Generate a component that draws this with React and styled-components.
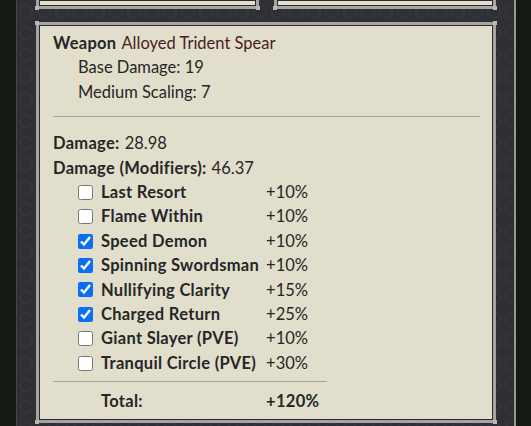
import React from 'react'
import styled, { createGlobalStyle } from 'styled-components'

const GlobalStyle = createGlobalStyle`
	html,
	body {
		margin: 0;
		padding: 0;
		background: #141b15;
	}
	body {
		font-family: Lato, 'Open Sans', sans-serif;
		font-size: 16.5px;
		color: #262626;
	}
`

const Frame = styled.div`
	box-sizing: border-box;
	width: 500px;
	min-height: 426px;
	margin-left: 16px;
	padding: 0 18px 0 19px;
	background-color: #2e3034;
	background-image: radial-gradient(
		circle at 50% 50%,
		transparent 5px,
		rgba(255, 255, 255, 0.035) 6px,
		transparent 8px
	);
	background-size: 18px 22px;
	border-left: 1px solid #46474b;
	border-right: 2px solid #9d989b;
	display: grid;
	grid-template-columns: 1fr 1fr;
	grid-auto-rows: min-content;
	column-gap: 15px;
	row-gap: 13px;
`

const cornerBits = (c) => `
	linear-gradient(${c}, ${c}) left top / 4px 4px no-repeat,
	linear-gradient(${c}, ${c}) right top / 4px 4px no-repeat,
	linear-gradient(${c}, ${c}) left bottom / 4px 4px no-repeat,
	linear-gradient(${c}, ${c}) right bottom / 4px 4px no-repeat
`

const Card = styled.div`
	position: relative;
	box-sizing: border-box;
	background: #e1decc;
	border: 3px solid #a8a3a5;
	box-shadow: inset 0 0 0 1px #2a292b;
	grid-column: ${(p) => (p.wide ? '1 / -1' : 'auto')};
	${(p) => (p.stub ? 'height: 9px; border-top: none;' : '')}
	padding: ${(p) => (p.stub ? '0' : '6px 13px 6px 14px')};

	&::after {
		content: '';
		position: absolute;
		inset: -4px;
		background: ${cornerBits('#bdb6b9')};
		pointer-events: none;
	}
`

const Line = styled.div`
	line-height: 24.4px;
	padding-left: ${(p) => (p.indent ? '25px' : '0')};
	white-space: nowrap;
`

const Key = styled.span`
	font-weight: 700;
	letter-spacing: 0.3px;
	margin-right: 5px;
`

const WeaponName = styled.span`
	color: #4c1c1c;
`

const Rule = styled.hr`
	border: none;
	border-top: 1px solid #a9a598;
	margin: ${(p) => p.space || '12px 0 14px'};
	grid-column: 1 / -1;
`

const ModGrid = styled.div`
	display: grid;
	grid-template-columns: 48px max-content 61px;
	width: max-content;
	line-height: 24.4px;
`

const BoxCell = styled.div`
	display: flex;
	align-items: center;
	justify-content: flex-end;
	padding-right: 8px;
`

const Check = styled.input`
	width: 15px;
	height: 15px;
	margin: 0;
	accent-color: #0b6ff2;
`

const ModName = styled.div`
	font-weight: 700;
	letter-spacing: 0.3px;
	padding-right: 7px;
	white-space: nowrap;
`

const Pct = styled.div`
	font-weight: ${(p) => (p.bold ? 700 : 400)};
	letter-spacing: ${(p) => (p.bold ? '0.3px' : '0')};
	white-space: nowrap;
`

const modifiers = [
	{ name: 'Last Resort', pct: '+10%', on: false },
	{ name: 'Flame Within', pct: '+10%', on: false },
	{ name: 'Speed Demon', pct: '+10%', on: true },
	{ name: 'Spinning Swordsman', pct: '+10%', on: true },
	{ name: 'Nullifying Clarity', pct: '+15%', on: true },
	{ name: 'Charged Return', pct: '+25%', on: true },
	{ name: 'Giant Slayer (PVE)', pct: '+10%', on: false },
	{ name: 'Tranquil Circle (PVE)', pct: '+30%', on: false },
]

const App = () => (
	<React.Fragment>
		<GlobalStyle />
		<Frame>
			<Card stub />
			<Card stub />
			<Card wide>
				<Line>
					<Key>Weapon</Key>
					<WeaponName>Alloyed Trident Spear</WeaponName>
				</Line>
				<Line indent>Base Damage: 19</Line>
				<Line indent>Medium Scaling: 7</Line>
				<Rule />
				<Line>
					<Key>Damage:</Key>28.98
				</Line>
				<Line>
					<Key>Damage (Modifiers):</Key>46.37
				</Line>
				<ModGrid>
					{modifiers.map((m) => (
						<React.Fragment key={m.name}>
							<BoxCell>
								<Check type="checkbox" defaultChecked={m.on} />
							</BoxCell>
							<ModName>{m.name}</ModName>
							<Pct>{m.pct}</Pct>
						</React.Fragment>
					))}
					<Rule space="6px 0 7px" />
					<div />
					<ModName>Total:</ModName>
					<Pct bold>+120%</Pct>
				</ModGrid>
			</Card>
		</Frame>
	</React.Fragment>
)

export default App
